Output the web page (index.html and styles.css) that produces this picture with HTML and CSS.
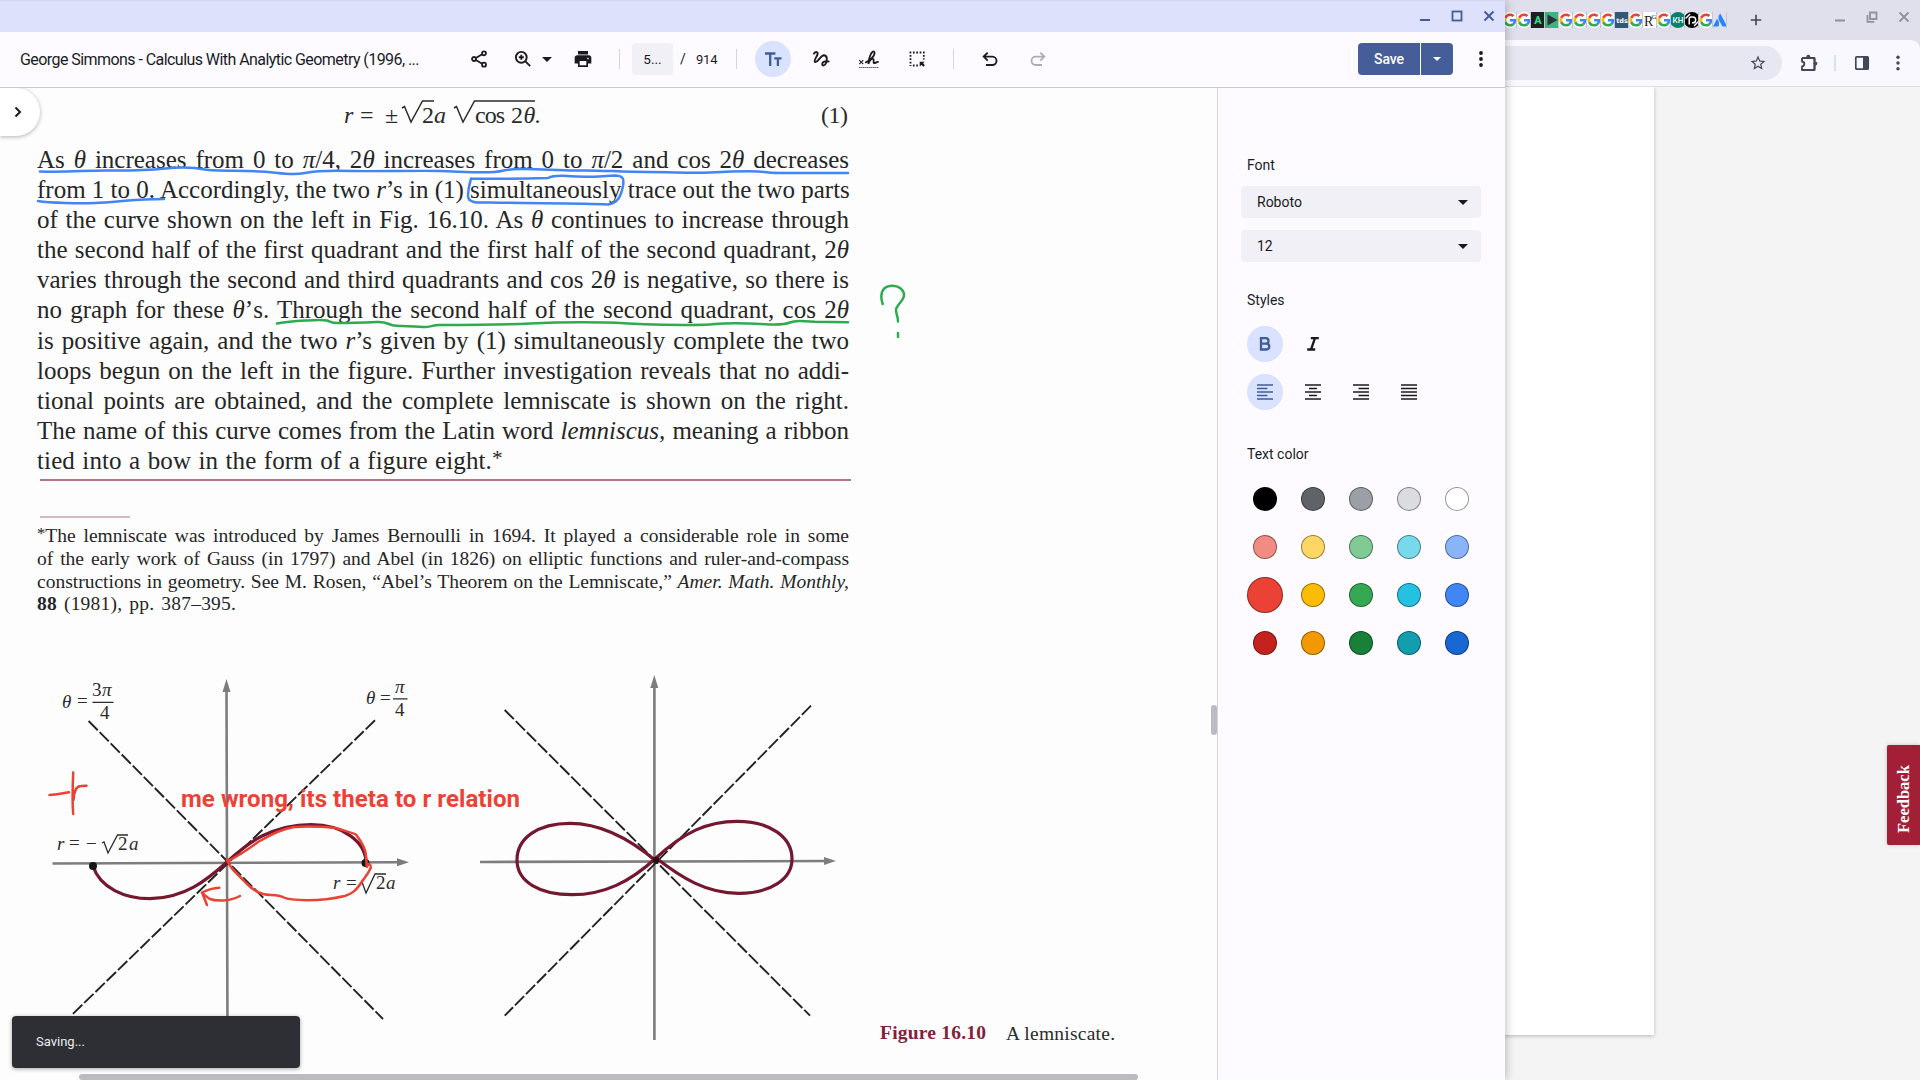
FILE: index.html
```html
<!DOCTYPE html>
<html lang="en">
<head>
<meta charset="utf-8">
<title>George Simmons - Calculus With Analytic Geometry</title>
<link rel="stylesheet" href="styles.css">
</head>
<body>
<svg class="defs" width="0" height="0" aria-hidden="true">
  <symbol id="g" viewBox="0 0 16 16">
    <circle cx="8" cy="8" r="8" fill="#fff"/>
    <g transform="translate(1.4 1.4) scale(.275)">
      <path fill="#EA4335" d="M24 9.500c3.540 0 6.710 1.220 9.210 3.600l6.850-6.850C35.900 2.380 30.470 0 24 0 14.620 0 6.510 5.380 2.560 13.220l7.980 6.190C12.430 13.720 17.740 9.500 24 9.500z"/>
      <path fill="#4285F4" d="M46.980 24.550c0-1.570-.15-3.090-.38-4.550H24v9.020h12.940c-.58 2.960-2.260 5.480-4.780 7.180l7.730 6c4.510-4.180 7.090-10.360 7.090-17.650z"/>
      <path fill="#FBBC05" d="M10.530 28.590c-.48-1.450-.76-2.990-.76-4.590s.27-3.140.76-4.590l-7.980-6.190C.92 16.460 0 20.120 0 24c0 3.880.92 7.540 2.560 10.780l7.970-6.190z"/>
      <path fill="#34A853" d="M24 48c6.480 0 11.930-2.130 15.890-5.810l-7.730-6c-2.150 1.450-4.920 2.300-8.160 2.300-6.260 0-11.570-4.220-13.470-9.910l-7.980 6.190C6.510 42.620 14.620 48 24 48z"/>
    </g>
  </symbol>
</svg>

<div class="desktop">
  <section class="browser">
    <header class="tabstrip">
      <div class="tabs">
        <span class="tab"><svg><use href="#g"/></svg></span>
        <span class="tab"><svg><use href="#g"/></svg></span>
        <span class="tab"><svg viewBox="0 0 16 16"><rect width="16" height="16" fill="#1f1f21"/><text x="8" y="12" text-anchor="middle" class="fav-a">A</text></svg></span>
        <span class="tab"><svg viewBox="0 0 16 16"><rect width="16" height="16" fill="#3fb27f"/><path d="M3.500 2.500 13.500 8 3.500 13.500z" fill="#2c3238"/></svg></span>
        <span class="tab"><svg><use href="#g"/></svg></span>
        <span class="tab"><svg><use href="#g"/></svg></span>
        <span class="tab"><svg><use href="#g"/></svg></span>
        <span class="tab"><svg><use href="#g"/></svg></span>
        <span class="tab"><svg viewBox="0 0 16 16"><rect width="16" height="16" fill="#355876"/><text x="8" y="10.500" text-anchor="middle" class="fav-tds">tds</text></svg></span>
        <span class="tab"><svg><use href="#g"/></svg></span>
        <span class="tab"><svg viewBox="0 0 16 16"><rect width="16" height="16" fill="#fff"/><text x="2" y="14" class="fav-r">R</text><text x="9.500" y="7" class="fav-rg">G</text></svg></span>
        <span class="tab"><svg><use href="#g"/></svg></span>
        <span class="tab"><svg viewBox="0 0 16 16"><circle cx="8" cy="8" r="8" fill="#08806a"/><text x="8" y="10.600" text-anchor="middle" class="fav-kh">KH</text></svg></span>
        <span class="tab"><svg viewBox="0 0 16 16"><circle cx="8" cy="8" r="8" fill="#000"/><path d="M5.200 12.500V7a2 2 0 0 1 2-2h1.600a2.800 2.800 0 0 1 0 5.800H8M1.500 6.500 6 2M10 14l4.500-4.500" fill="none" stroke="#fff" stroke-width="1.500"/></svg></span>
        <span class="tab"><svg><use href="#g"/></svg></span>
        <span class="tab"><svg viewBox="0 0 16 16"><path d="M8.300 1.500C5.500 4.500 6.500 8 8.300 10.500L10.500 14.500H15z" fill="#2684ff"/><path d="M5 6.800 1 14.500h5.500C7.500 11.500 7 9 5 6.800z" fill="#2684ff"/></svg></span>
        <span class="tab"></span>
      </div>
      <svg class="newtab" viewBox="0 0 12 12"><path d="M6 .8v10.400M.8 6h10.400" stroke="#41444f" stroke-width="1.600"/></svg>
      <div class="winbtns grey">
        <svg viewBox="0 0 12 12"><path d="M1 9.500h10" stroke="#8f919d" stroke-width="2"/></svg>
        <svg viewBox="0 0 12 12"><path d="M4 1.500h6.500v6.500H4zM1.500 4v6.800h6.800" fill="none" stroke="#8f919d" stroke-width="1.800"/></svg>
        <svg viewBox="0 0 12 12"><path d="M1.500 1.500l9 9M10.500 1.500l-9 9" stroke="#8f919d" stroke-width="1.800"/></svg>
      </div>
    </header>
    <div class="navbar">
      <div class="omnibox"><svg class="i18" viewBox="0 0 24 24"><path fill="#42465a" d="M22 9.240l-7.190-.62L12 2 9.190 8.630 2 9.240l5.460 4.730L5.820 21 12 17.270 18.180 21l-1.630-7.030L22 9.240zM12 15.400l-3.760 2.270 1-4.280-3.320-2.880 4.380-.38L12 6.100l1.710 4.040 4.380.38-3.320 2.880 1 4.280L12 15.400z"/></svg></div>
      <svg class="ext" viewBox="0 0 18 18"><path d="M2 4h12.500v3.500M14.500 11v5H2v-3.500c2-.3 2.300-1.200 2.300-2.500S4 7.800 2 7.500V4" fill="none" stroke="#42465a" stroke-width="1.900" stroke-linejoin="round"/><path d="M14.500 4.500v11" stroke="#42465a" stroke-width="1.900"/><circle cx="8.300" cy="2.800" r="2" fill="#42465a"/><circle cx="15.300" cy="9.500" r="2" fill="#42465a"/></svg>
      <i class="navsep"></i>
      <svg class="side" viewBox="0 0 16 16"><rect x="1.800" y="1.800" width="12.400" height="12.400" rx="1" fill="none" stroke="#42465a" stroke-width="1.700"/><path d="M9 1.500h5.200v13H9z" fill="#42465a"/></svg>
      <svg class="kebab" viewBox="0 0 4 16"><g fill="#42465a"><circle cx="2" cy="2.200" r="1.700"/><circle cx="2" cy="8" r="1.700"/><circle cx="2" cy="13.800" r="1.700"/></g></svg>
    </div>
    <main class="webpage">
      <div class="sheet"></div>
      <div class="feedback">Feedback</div>
    </main>
  </section>

  <section class="viewer">
    <header class="titlebar">
      <div class="winbtns">
        <svg viewBox="0 0 12 12"><path d="M1 10h10" stroke="#405c9b" stroke-width="2"/></svg>
        <svg viewBox="0 0 12 12"><rect x="1.500" y="1.500" width="9" height="9" fill="none" stroke="#405c9b" stroke-width="1.800"/></svg>
        <svg viewBox="0 0 12 12"><path d="M1.500 1.500l9 9M10.500 1.500l-9 9" stroke="#405c9b" stroke-width="1.900"/></svg>
      </div>
    </header>
    <nav class="toolbar">
      <span class="doc-title">George Simmons - Calculus With Analytic Geometry (1996, ...</span>
      <svg class="ic share" viewBox="0 0 20 20"><g fill="none" stroke="#1b1b1f" stroke-width="1.800"><circle cx="15" cy="4.300" r="2"/><circle cx="5" cy="10" r="2"/><circle cx="15" cy="15.700" r="2"/><path d="M6.800 9 13.200 5.300M6.800 11l6.400 3.700"/></g></svg>
      <svg class="ic zoom" viewBox="0 0 20 20"><g fill="none" stroke="#1b1b1f" stroke-width="1.900"><circle cx="8.300" cy="8.300" r="5.400"/><path d="M12.200 12.200l5 5M8.300 5.800v5M5.800 8.300h5"/></g></svg>
      <svg class="caret" viewBox="0 0 10 5"><path d="M0 0h10L5 5z" fill="#1b1b1f"/></svg>
      <svg class="ic print" viewBox="0 0 24 24"><path fill="#1b1b1f" fill-rule="evenodd" d="M19 7.500H5c-1.660 0-3 1.340-3 3V17.500h4v4h12v-4h4v-7c0-1.660-1.340-3-3-3zM16 19.500H8v-5h8zM18 12.500a1 1 0 1 1 0-2 1 1 0 0 1 0 2zM18 2.500H6v4h12z"/></svg>
      <i class="sep s1"></i>
      <span class="page-box">5...</span>
      <span class="slash">/</span>
      <span class="total">914</span>
      <i class="sep s2"></i>
      <span class="round on"><svg viewBox="0 0 20 20"><path d="M2 4.500h10.400M7.200 4.500V17M11.200 9.400h7.300M14.900 9.400V17" fill="none" stroke="#405c9b" stroke-width="2.300"/></svg></span>
      <span class="round"><svg viewBox="0 0 20 20"><path d="M2.900 4.600C4.500 2.600 7 2.400 6.600 5 6.200 7.500 2.300 11.500 4 13 6.200 14.600 9 7 12.800 6.200 16.500 6.300 16.300 11 15 14 14 17 11.300 17 11.200 15.200 11.200 12.800 14 11.800 17.600 12.500" fill="none" stroke="#1b1b1f" stroke-width="1.900" stroke-linecap="round"/></svg></span>
      <span class="round"><svg viewBox="0 0 20 20"><path d="M6.800 13.300C10.500 12 16 7 15.500 3.600 15 1.200 12.500 2.800 11 7 9.800 10.500 9.300 13 9.300 14.800 10.500 12 12.500 9.600 14.200 10 15.800 10.600 13.500 13.300 15 14.200 16.400 14.500 17.300 12.800 19 12.900" fill="none" stroke="#1b1b1f" stroke-width="1.800" stroke-linecap="round"/><path d="M.3 11.200l4 4M4.300 11.200l-4 4" stroke="#1b1b1f" stroke-width="1.100"/><path d="M.3 18.500h19.200" stroke="#1b1b1f" stroke-width="1.100" stroke-dasharray="1.100 .9"/></svg></span>
      <span class="round"><svg viewBox="0 0 20 20"><path d="M2.600 3.500h15.200M3.500 6v11M16.800 6v4.500M5.900 16.500h5" fill="none" stroke="#1b1b1f" stroke-width="1.800" stroke-dasharray="1.700 1.650"/><path d="M12.700 12.700h5l-1.600 1.600 1.800 1.900-1.600 1.500-1.800-1.800-1.800 1.700z" fill="#1b1b1f"/></svg></span>
      <i class="sep s3"></i>
      <span class="round undo"><svg viewBox="0 0 20 20"><path d="M6 16h6.300a4.200 4.200 0 0 0 0-8.400H4M7.700 3.600l-4 4 4 4" fill="none" stroke="#1b1b1f" stroke-width="1.900"/></svg></span>
      <span class="round redo"><svg viewBox="0 0 20 20"><path d="M14 16H7.700a4.200 4.200 0 0 1 0-8.400H16M12.300 3.600l4 4-4 4" fill="none" stroke="#acabaf" stroke-width="1.800"/></svg></span>
      <span class="save"><b>Save</b><b class="more"><svg class="caret" viewBox="0 0 10 5"><path d="M0 0h10L5 5z" fill="#fff"/></svg></b></span>
      <svg class="vdots" viewBox="0 0 4 16"><g fill="#1b1b1f"><circle cx="2" cy="2" r="1.900"/><circle cx="2" cy="8" r="1.900"/><circle cx="2" cy="14" r="1.900"/></g></svg>
    </nav>

    <div class="work">
      <div class="doc">
        <svg class="formula" viewBox="0 88 1217 57">
          <g class="serif" font-size="24">
            <text x="344" y="122.500" class="it">r</text><text x="360" y="122.500">=</text><text x="385" y="122.500">±</text>
            <text x="422" y="122.500">2</text><text x="434" y="122.500" class="it">a</text>
            <text x="475" y="122.500" textLength="30">cos</text><text x="511" y="122.500">2</text><text x="523.500" y="122.500" class="it">θ</text><text x="534.500" y="122.500">.</text>
            <text x="821" y="122.500" textLength="27">(1)</text>
          </g>
          <path d="M402 108l2.500-1.500 6.500 15.500L422.500 101H434M454 108l2.500-1.500 6.500 15.500L474.500 101H535" fill="none" stroke="#2b2b2b" stroke-width="1.500"/>
        </svg>
        <div class="para">
          <p>As <i>θ</i> increases from 0 to <i>π</i>/4, 2<i>θ</i> increases from 0 to <i>π</i>/2 and cos 2<i>θ</i> decreases</p>
          <p>from 1 to 0. Accordingly, the two <i>r</i>’s in (1) simultaneously trace out the two parts</p>
          <p>of the curve shown on the left in Fig. 16.10. As <i>θ</i> continues to increase through</p>
          <p>the second half of the first quadrant and the first half of the second quadrant, 2<i>θ</i></p>
          <p>varies through the second and third quadrants and cos 2<i>θ</i> is negative, so there is</p>
          <p>no graph for these <i>θ</i>’s. Through the second half of the second quadrant, cos 2<i>θ</i></p>
          <p>is positive again, and the two <i>r</i>’s given by (1) simultaneously complete the two</p>
          <p>loops begun on the left in the figure. Further investigation reveals that no addi-</p>
          <p>tional points are obtained, and the complete lemniscate is shown on the right.</p>
          <p>The name of this curve comes from the Latin word <i>lemniscus,</i> meaning a ribbon</p>
          <p class="last">tied into a bow in the form of a figure eight.<span class="star">*</span></p>
        </div>
        <hr class="rule"><hr class="rule short">
        <div class="note">
          <p><span class="star">*</span>The lemniscate was introduced by James Bernoulli in 1694. It played a considerable role in some</p>
          <p>of the early work of Gauss (in 1797) and Abel (in 1826) on elliptic functions and ruler-and-compass</p>
          <p>constructions in geometry. See M. Rosen, “Abel’s Theorem on the Lemniscate,” <i>Amer. Math. Monthly,</i></p>
          <p class="last"><b>88</b> (1981), pp. 387–395.</p>
        </div>
        <svg class="figure" viewBox="0 640 1217 434">
          <g fill="none" stroke="#7d7d7d" stroke-width="2.600">
            <path d="M226.500 690L227.500 1040M52.500 863.500L398 862.300M654.400 688V1040M480 862L826 861"/>
          </g>
          <path d="M226.500 679l4 13h-8zM409 862.300l-12 4v-8zM654.300 675l4 13h-8zM836 861l-12 4v-8z" fill="#7d7d7d"/>
          <g fill="none" stroke="#222" stroke-width="1.900" stroke-dasharray="13 2.700">
            <path d="M88.600 721L383 1019M375 720.300L72.500 1014.300M504.700 710L810 1015.700M811 705.700L504.700 1015.700"/>
          </g>
          <g fill="none" stroke="#74172f" stroke-width="3.200">
            <path d="M93 866C100 888 125 898.700 150 898.700 185 898 207 880 227 862 240 850 250 842 262 836 280 827 295 824.500 311 824.500 343 824.500 366 842 366 863"/>
            <path d="M656 861C630 839 602 823.300 570 823.300 538 823.300 517 838 517 860 517 882 540 894.700 572 894.700 604 894.700 630 882 656 858 684 832 708 821.300 737 821.300 770 821.300 792 837 792 859 792 879 771 893.300 738.500 893.300 706 893.300 682 878 656 858"/>
          </g>
          <circle cx="93" cy="866" r="4" fill="#161616"/><circle cx="365.500" cy="863" r="4" fill="#161616"/><circle cx="656" cy="860" r="3.200" fill="#2a1016"/>
          <g class="serif" font-size="19">
            <text x="62" y="707.500" class="it">θ</text><text x="77" y="707">=</text><text x="92" y="696">3</text><text x="102" y="696" class="it">π</text><text x="100" y="718.500">4</text>
            <text x="366" y="704" class="it">θ</text><text x="380" y="703.500">=</text><text x="395" y="693" class="it">π</text><text x="395" y="716">4</text>
            <text x="57" y="849.500" class="it">r</text><text x="69" y="849">=</text><text x="86" y="850">−</text><text x="118" y="849.500">2</text><text x="129" y="849.500" class="it">a</text>
            <text x="333" y="888.500" class="it">r</text><text x="346" y="888.500">=</text><text x="376" y="888.500">2</text><text x="386" y="888.500" class="it">a</text>
          </g>
          <path d="M92.500 702.300h21M393 698.800h14.500M102 843l2-1 4 11 9.500-18H128M360 883l2-1 4 11 9-19H386" fill="none" stroke="#2b2b2b" stroke-width="1.300"/>
          <text x="880" y="1038.500" textLength="106" class="serif fig-no">Figure 16.10</text>
          <text x="1006" y="1040" textLength="109" class="serif" font-size="19.500">A lemniscate.</text>
        </svg>

        <svg class="ink" viewBox="0 88 1217 992">
          <g fill="none" stroke-width="2.500" stroke-linejoin="round" stroke-linecap="round">
            <g stroke="#4285f4">
              <path d="M40 171.500C70 172.500 85 170.200 110 170.500S150 170 165 168.500 195 167.500 205 169.500 250 170 268 172 295 175 305 173 330 170.500 350 171 420 170.500 440 171 480 173 494 172 500 169.500 520 169 560 171 580 170.500 620 172 647 172 690 173.500 710 172.500 745 171 758 171.500 762 173 780 173L848 173"/>
              <path d="M38 201C50 203 80 203.500 95 203S130 200 145 199.500L164 199"/>
              <path d="M471 178.500C500 179 530 178.500 548 178 552 176 558 175.500 567 176 590 178 600 176 615 175.500 624 175.500 624 180 623 186 621 196 618 203 608 204.500 580 203 530 203.500 490 202.500 474 203 468 202 468 196 468 188 470 182 471 178.500"/>
            </g>
            <g stroke="#2fab4f">
              <path d="M277 323.500C285 322 295 321 305 320.500S323 319.500 327 320.500 330 323 338 323 365 322.500 377 322 388 325.500 396 325.700 415 326.500 423 327 431 325 440 325 500 325 530 323.500 580 322 605 322.500 630 324.500 663 324.700 700 325.500 715 324 750 323.300 765 324.200 785 324.500 790 322.500 800 320.800 815 321.800L848 322.300"/>
              <path d="M882.700 304C880 296 881 287 890 286 899 285 904 290 904 295 904 301 896 305 896 310 896 314 898 316 898 321.500M898 333v4"/>
            </g>
            <g stroke="#ea4335">
              <path d="M49.500 795C58 795 62 793 69 792.300M73.200 772.500Q72 800 73.200 814M73.500 800C74 790 77 786 81 786L86.500 785.700"/>
              <path d="M228 861C240 855 250 848 258 842 270 835 282 829 293 827.300 305 826 320 826.500 335.700 828 345 831 352 832.500 356 834.500 361 841 366 848 366 856L366.800 867C368 862 371 864 370.700 868 368 874 366 876 363 880 355 893 350 894 344.600 896 332 899 318 900.300 307 900.300 293 900 287 899 284 897.500 278 894 270 895.500 264 894.300 256 893 250 887 246 883 236 872 231 870 227 859.500L229 861"/>
              <path d="M240 896C229 902 215 901 210 899 207 897 204 895 202 892.500M219.300 887.700C213 888 207 890 202 892.500L207 905"/>
            </g>
          </g>
          <text x="181" y="807.300" textLength="339" class="ink-text">me wrong, its theta to r relation</text>
        </svg>
        <span class="expander"><svg viewBox="0 0 8 12"><path d="M1.500 1.500 6 6 1.500 10.500" fill="none" stroke="#1b1b1f" stroke-width="2"/></svg></span>
        <i class="vthumb"></i><i class="hthumb"></i>
        <div class="toast">Saving...</div>
      </div>

      <aside class="panel">
        <h3>Font</h3>
        <div class="select">Roboto<svg class="caret" viewBox="0 0 10 5"><path d="M0 0h10L5 5z" fill="#1b1b1f"/></svg></div>
        <div class="select">12<svg class="caret" viewBox="0 0 10 5"><path d="M0 0h10L5 5z" fill="#1b1b1f"/></svg></div>
        <h3 class="h-styles">Styles</h3>
        <div class="btnrow">
          <span class="on"><svg viewBox="0 0 20 20"><path d="M6 4.200h4.800a2.700 2.700 0 0 1 0 5.400H6zM6 9.600h5.300a2.900 2.900 0 0 1 0 5.900H6z" fill="none" stroke="#405c9b" stroke-width="2.300"/></svg></span>
          <span><svg viewBox="0 0 20 20"><path d="M7.800 4.200h8M4.200 15.500h8M12 4.200 8 15.500" fill="none" stroke="#1b1b1f" stroke-width="2.300"/></svg></span>
        </div>
        <div class="btnrow">
          <span class="on"><svg viewBox="0 0 16 16"><path d="M0 1h16M0 4.500h10.500M0 8h16M0 11.500h10.500M0 15h16" stroke="#405c9b" stroke-width="1.400"/></svg></span>
          <span><svg viewBox="0 0 16 16"><path d="M0 1h16M4 4.500h8M0 8h16M4 11.500h8M0 15h16" stroke="#1b1b1f" stroke-width="1.400"/></svg></span>
          <span><svg viewBox="0 0 16 16"><path d="M0 1h16M5.500 4.500h10.500M0 8h16M5.500 11.500h10.500M0 15h16" stroke="#1b1b1f" stroke-width="1.400"/></svg></span>
          <span><svg viewBox="0 0 16 16"><path d="M0 1h16M0 4.500h16M0 8h16M0 11.500h16M0 15h16" stroke="#1b1b1f" stroke-width="1.400"/></svg></span>
        </div>
        <h3 class="h-color">Text color</h3>
        <div class="swatches">
          <i style="background:#000"></i><i style="background:#5f6368"></i><i style="background:#9aa0a6"></i><i style="background:#dadce0"></i><i style="background:#fff"></i>
          <i style="background:#f28b82"></i><i style="background:#fdd663"></i><i style="background:#81c995"></i><i style="background:#78d9ec"></i><i style="background:#8ab4f8"></i>
          <i class="big" style="background:#ea4335"></i><i style="background:#fbbc04"></i><i style="background:#34a853"></i><i style="background:#24c1e0"></i><i style="background:#4285f4"></i>
          <i style="background:#c5221f"></i><i style="background:#f29900"></i><i style="background:#188038"></i><i style="background:#129eaf"></i><i style="background:#1967d2"></i>
        </div>
      </aside>
    </div>
  </section>
</div>
</body>
</html>
```
FILE: styles.css
```css
* { box-sizing: border-box; }
body { margin: 0; font-family: Roboto, sans-serif; font-size: 14px; color: #1b1b1f; }
p, h3, hr { margin: 0; }
svg { display: block; flex: none; overflow: visible; }
.defs { position: absolute; }
.desktop { position: relative; width: 1920px; height: 1080px; overflow: hidden; background: #f4f4f4; }

/* Browser window behind the viewer */
.browser { height: 1080px; display: flex; flex-direction: column; }
.tabstrip { height: 40px; padding-left: 1503px; display: flex; background: #dfe0ec; }
.tabs { display: flex; align-items: center; width: 247px; }
.tab { width: 14px; height: 16px; border-right: 1px solid #c3c4ce; display: flex; justify-content: center; overflow: hidden; }
.tab:last-child { width: 1px; margin-left: -1px; border: 0; }
.tab svg { width: 16px; height: 16px; }
.newtab { width: 12px; height: 12px; margin-top: 14px; }
.winbtns { display: flex; gap: 20px; }
.winbtns svg { width: 12px; height: 12px; }
.tabstrip .winbtns { margin: 11px 10px 0 auto; }
.fav-a { font: bold 11px Roboto, sans-serif; fill: #2ee58a; }
.fav-tds { font: bold 6.500px "DejaVu Sans", sans-serif; fill: #fff; }
.fav-r { font: 14px "Liberation Serif", serif; fill: #222; }
.fav-rg { font: 7px "Liberation Serif", serif; fill: #222; }
.fav-kh { font: bold 7.500px Lato, sans-serif; fill: #fff; }
.navbar { height: 47px; background: #f9f8fe; border-bottom: 1px solid #dddeea; border-top-right-radius: 9px; box-shadow: 9px -9px 0 #dfe0ec; display: flex; align-items: center; }
.omnibox { width: 1782px; height: 34px; border-radius: 17px; background: #e6e7f0; display: flex; align-items: center; justify-content: flex-end; padding-right: 15px; }
.i18 { width: 18px; height: 18px; }
.ext { width: 18px; height: 18px; margin-left: 18px; }
.navsep { width: 2px; height: 16px; background: #d6e1fc; margin-left: 16px; }
.side { width: 16px; height: 16px; margin-left: 18px; }
.kebab { width: 4px; height: 16px; margin-left: 26px; }
.webpage { flex: 1; display: flex; justify-content: space-between; }
.sheet { width: 1654px; height: 948px; background: #fff; box-shadow: 0 1px 4px rgba(0,0,0,.25); clip-path: inset(0 -8px -8px 0); }
.feedback { width: 33px; height: 100px; margin-top: 658px; background: #a31f37; color: #fff; font: bold 16.500px/33px "Liberation Serif", serif; writing-mode: vertical-rl; transform: rotate(180deg); padding-top: 12px; border-radius: 0 2px 2px 0; box-shadow: 0 0 4px rgba(0,0,0,.2); }

/* PDF viewer window */
.viewer { position: absolute; left: 0; top: 0; width: 1505px; height: 1080px; display: flex; flex-direction: column; background: #fdfbff; box-shadow: 0 0 10px rgba(0,0,0,.3); }
.titlebar { height: 32px; background: #dde1fb; border-top: 1px solid #d3d7ec; display: flex; justify-content: flex-end; padding: 9px 10px 0 0; }
.toolbar { height: 56px; border-bottom: 1px solid #cac9cf; display: flex; align-items: center; padding: 0 0 1px 20px; }
.doc-title { width: 449px; font-size: 16px; letter-spacing: -.56px; white-space: nowrap; }
.ic { width: 20px; height: 20px; }
.zoom { margin-left: 24px; }
.caret { width: 10px; height: 5px; }
.toolbar > .caret { margin-left: 9px; }
.print { margin-left: 21px; }
.sep { width: 1px; height: 20px; background: #d4d4da; }
.s1 { margin: 0 12px 0 26px; }
.page-box { width: 41px; height: 32px; border-radius: 4px; background: #f1f0f6; display: flex; align-items: center; justify-content: center; font-size: 13.500px; padding-right: 0; }
.slash { margin-left: 7px; width: 16px; }
.total { width: 40px; font-size: 13px; letter-spacing: -.2px; }
.round { width: 36px; height: 36px; border-radius: 50%; display: flex; align-items: center; justify-content: center; margin-right: 12px; }
.round svg { width: 20px; height: 20px; }
.s2 { margin-right: 18px; }
.s3 { margin: 0 18px 0 6px; }
.on { background: #d9e2ff; }
.save { margin-left: auto; display: flex; gap: 1px; color: #fff; }
.save b { width: 62px; height: 32px; background: #455e99; border-radius: 4px 0 0 4px; display: flex; align-items: center; justify-content: center; font-weight: 500; font-size: 14px; letter-spacing: -.1px; }
.save .more { width: 32px; border-radius: 0 4px 4px 0; }
.save .caret { width: 8px; height: 4px; }
.vdots { width: 4px; height: 16px; margin: 0 22px 0 26px; }

.work { flex: 1; display: flex; min-height: 0; }
.doc { position: relative; width: 1217px; background: #fdfdfe; overflow: hidden; color: #262626; }
.serif, .para, .note { font-family: "Liberation Serif", serif; fill: #2b2b2b; }
.it { font-style: italic; }
.formula { width: 1217px; height: 57px; }
.para { width: 812px; margin-left: 37px; font-size: 25px; }
.para p { height: 30.100px; line-height: 30.100px; }
.para p, .note p { text-align: justify; text-align-last: justify; white-space: nowrap; }
.para .last, .note .last { text-align-last: left; }
.para .last { letter-spacing: .12px; word-spacing: 1px; }
.note .last { word-spacing: 2px; letter-spacing: .2px; }
.star { position: relative; top: -.2em; font-size: .85em; line-height: 0; }
.rule { width: 811px; margin: 3px 0 0 40px; border: 0; height: 2px; background: #b37788; }
.rule.short { width: 90px; margin-top: 35px; background: #d3bac1; }
.note { width: 812px; margin: 7px 0 0 37px; font-size: 19.500px; }
.note p { height: 22.800px; line-height: 22.800px; }
.figure { width: 1217px; height: 434px; margin-top: 24px; }
.fig-no { font-size: 19.500px; font-weight: bold; fill: #83203c; }
.ink { position: absolute; left: 0; top: 0; width: 1217px; height: 992px; }
.ink-text { font: bold 24px Roboto, sans-serif; fill: #ea4335; }
.expander { position: absolute; left: 0; top: 0; width: 40px; height: 48px; border-radius: 0 24px 24px 0; background: #fff; box-shadow: 0 1px 4px rgba(0,0,0,.3); display: flex; align-items: center; padding-left: 14px; }
.expander svg { width: 8px; height: 12px; }
.vthumb { position: absolute; right: 0; top: 617px; width: 6px; height: 30px; border-radius: 3px; background: #bcbbc2; }
.hthumb { position: absolute; left: 79px; bottom: 0; width: 1059px; height: 6px; border-radius: 3px; background: #bcbbc2; }
.toast { position: absolute; left: 12px; top: 928px; width: 288px; height: 52px; border-radius: 4px; background: #2e2f34; color: #ececef; padding-left: 24px; line-height: 52px; font-size: 13px; box-shadow: 0 1px 4px rgba(0,0,0,.35); }

.panel { flex: 1; border-left: 1px solid #d6d5dc; padding: 67px 24px 0 23px; background: #fdfbff; }
.panel h3 { height: 20px; font-size: 14px; font-weight: 400; line-height: 20px; padding-left: 6px; }
.select { width: 240px; height: 32px; margin-top: 12px; border-radius: 4px; background: #f1f0f6; display: flex; align-items: center; justify-content: space-between; padding: 0 13px 0 16px; }
.panel h3 + .select { margin-top: 11px; }
.panel .h-styles { margin: 28px 0 16px; }
.panel .h-color { margin: 34px 0 11px; }
.btnrow { display: flex; gap: 12px; padding-left: 6px; margin-bottom: 12px; }
.btnrow span { width: 36px; height: 36px; border-radius: 50%; display: flex; align-items: center; justify-content: center; }
.btnrow svg { width: 20px; height: 20px; }
.btnrow svg[viewBox="0 0 16 16"] { width: 16px; height: 16px; }
.swatches { display: grid; grid-template-columns: repeat(5, 48px); grid-auto-rows: 48px; place-items: center; }
.swatches i { width: 24px; height: 24px; border-radius: 50%; border: 1px solid rgba(0,0,0,.4); }
.swatches .big { width: 36px; height: 36px; }
```
